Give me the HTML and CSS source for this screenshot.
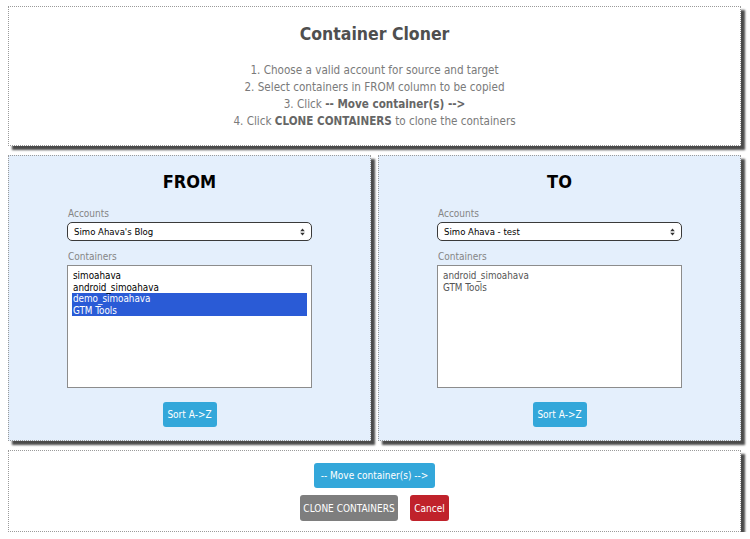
FILE: index.html
```html
<!DOCTYPE html>
<html lang="en">
<head>
<meta charset="utf-8">
<title>Container Cloner</title>
<link rel="stylesheet" href="styles.css">
</head>
<body>
<div class="page">
  <section class="box intro">
    <h1 class="title">Container Cloner</h1>
    <ol class="steps">
      <li>1. Choose a valid account for source and target</li>
      <li>2. Select containers in FROM column to be copied</li>
      <li>3. Click <b>-- Move container(s) --&gt;</b></li>
      <li>4. Click <b>CLONE CONTAINERS</b> to clone the containers</li>
    </ol>
  </section>

  <div class="columns">
    <section class="box panel">
      <h2 class="panel-title">FROM</h2>
      <div class="field">
        <div class="label">Accounts</div>
        <div class="select">
          <span>Simo Ahava's Blog</span>
          <svg class="arrows" width="5" height="8" viewBox="0 0 5 8"><path d="M2.5 0.5 L4.8 3.2 L0.2 3.2 Z M0.2 4.8 L4.8 4.8 L2.5 7.5 Z" fill="#333"/></svg>
        </div>
        <div class="label label-gap">Containers</div>
        <div class="listbox">
          <div class="opt">simoahava</div>
          <div class="opt">android_simoahava</div>
          <div class="opt sel">demo_simoahava</div>
          <div class="opt sel">GTM Tools</div>
        </div>
      </div>
      <button class="btn btn-blue sort">Sort A-&gt;Z</button>
    </section>

    <section class="box panel">
      <h2 class="panel-title">TO</h2>
      <div class="field">
        <div class="label">Accounts</div>
        <div class="select">
          <span>Simo Ahava - test</span>
          <svg class="arrows" width="5" height="8" viewBox="0 0 5 8"><path d="M2.5 0.5 L4.8 3.2 L0.2 3.2 Z M0.2 4.8 L4.8 4.8 L2.5 7.5 Z" fill="#333"/></svg>
        </div>
        <div class="label label-gap">Containers</div>
        <div class="listbox">
          <div class="opt muted">android_simoahava</div>
          <div class="opt muted">GTM Tools</div>
        </div>
      </div>
      <button class="btn btn-blue sort">Sort A-&gt;Z</button>
    </section>
  </div>

  <section class="box actions">
    <button class="btn btn-blue move">-- Move container(s) --&gt;</button>
    <div class="action-row">
      <button class="btn btn-gray clone">CLONE CONTAINERS</button>
      <button class="btn btn-red cancel">Cancel</button>
    </div>
  </section>
</div>
</body>
</html>
```

FILE: styles.css
```css
html, body {
  margin: 0;
  padding: 0;
  background: #ffffff;
}

body {
  font-family: "DejaVu Sans Condensed", "DejaVu Sans", sans-serif;
  font-stretch: condensed;
}

.page {
  width: 733px;
  padding: 6px 0 0 8px;
  display: flex;
  flex-direction: column;
  gap: 9px;
}

.box {
  border: 1px dotted #9a9a9a;
  box-shadow: 4px 4px 2px #4a4a4a;
  box-sizing: border-box;
}

.intro {
  height: 140px;
  padding-top: 16px;
  text-align: center;
  background: #fff;
}

.title {
  margin: 0;
  font-size: 17.5px;
  line-height: 22px;
  font-weight: bold;
  color: #4f4f4f;
}

.steps {
  list-style: none;
  margin: 17px 0 0;
  padding: 0;
  font-size: 11.6px;
  line-height: 17px;
  color: #7a7a7a;
}

.steps b {
  color: #666;
}

.columns {
  display: grid;
  grid-template-columns: 363px 363px;
  gap: 7px;
}

.panel {
  height: 286px;
  background: #e4effc;
  padding-top: 15px;
  display: flex;
  flex-direction: column;
  align-items: center;
}

.panel-title {
  margin: 0;
  font-size: 18px;
  line-height: 22px;
  font-weight: bold;
  color: #000;
}

.field {
  width: 245px;
  margin-top: 15px;
  display: flex;
  flex-direction: column;
}

.label {
  font-size: 10px;
  line-height: 12px;
  color: #858585;
  padding-left: 1px;
  margin-bottom: 2px;
}

.label-gap {
  margin-top: 10px;
}

.select {
  height: 19px;
  box-sizing: border-box;
  border: 1px solid #3a3a3a;
  border-radius: 5px;
  background: #fff;
  padding: 0 6px 0 6px;
  display: flex;
  align-items: center;
  justify-content: space-between;
  font-size: 9.5px;
  color: #000;
}

.arrows {
  display: block;
}

.listbox {
  height: 123px;
  box-sizing: border-box;
  border: 1px solid #8c8c8c;
  background: #fff;
  padding: 4px;
}

.opt {
  font-size: 9.8px;
  line-height: 11.5px;
  height: 11.5px;
  padding-left: 1px;
  color: #000;
  white-space: nowrap;
}

.opt.sel {
  background: #2a5bd6;
  color: #fff;
}

.opt.muted {
  color: #555;
}

.btn {
  font-family: "DejaVu Sans Condensed", "DejaVu Sans", sans-serif;
  font-stretch: condensed;
  font-size: 10px;
  color: #fff;
  border: none;
  border-radius: 3px;
  height: 25px;
  padding: 0;
  white-space: nowrap;
  box-sizing: border-box;
  cursor: pointer;
}

.btn-blue {
  background: #33a7da;
}

.btn-gray {
  background: #7e7e7e;
}

.btn-red {
  background: #c0222b;
}

.sort {
  margin-top: 14px;
  width: 54px;
}

.actions {
  height: 82px;
  padding-top: 12px;
  display: flex;
  flex-direction: column;
  align-items: center;
  background: #fff;
}

.move {
  width: 121px;
}

.action-row {
  margin-top: 7px;
  display: flex;
  gap: 12px;
}

.clone {
  width: 98px;
  height: 26px;
}

.cancel {
  width: 39px;
  height: 26px;
}
```
